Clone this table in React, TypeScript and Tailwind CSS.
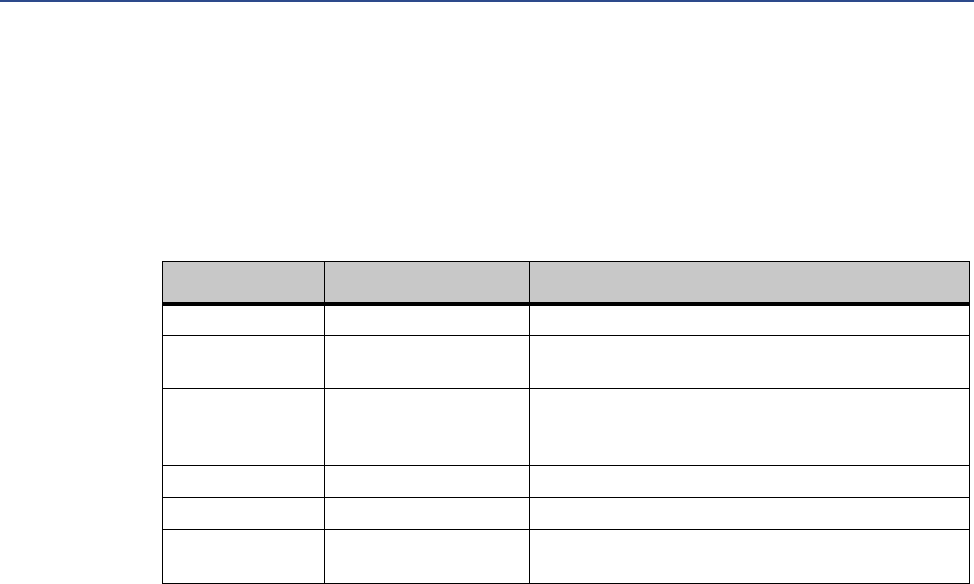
import React from "react";

const rows = [30, 53, 77, 32, 32, 53];

export default function App() {
  return (
    <div className="w-[974px] h-[584px] bg-white relative overflow-hidden font-['Liberation_Sans',sans-serif]">
      <div className="h-[2px] bg-[#2d4a8b]" />
      <div className="pt-[259px] pl-[162px]">
        <div className="w-[808px] border border-black">
          <div className="flex h-[44px] bg-[#c8c8c8] border-b-4 border-black">
            <div className="w-[162px] border-r border-black" />
            <div className="w-[205px] border-r border-black" />
            <div className="flex-1" />
          </div>
          {rows.map((h, i) => (
            <div
              key={i}
              className={`flex ${i < rows.length - 1 ? "border-b border-black" : ""}`}
              style={{ height: h }}
            >
              <div className="w-[162px] border-r border-black" />
              <div className="w-[205px] border-r border-black" />
              <div className="flex-1" />
            </div>
          ))}
        </div>
      </div>
    </div>
  );
}
